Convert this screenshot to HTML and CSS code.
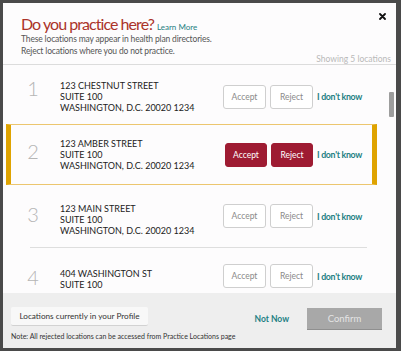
FILE: index.html
```html
<!DOCTYPE html>
<html>
<head>
<meta charset="utf-8">
<link rel="stylesheet" href="styles.css">
</head>
<body>
<div class="frame">
  <div class="modal">
    <div class="header">
      <div class="title-row">
        <h1 class="title">Do you practice here?</h1>
        <a class="learn">Learn More</a>
        <span class="close"><svg width="7" height="7" viewBox="0 0 7 7"><path d="M1 1L6 6M6 1L1 6" stroke="#111" stroke-width="1.8" stroke-linecap="round"/></svg></span>
      </div>
      <div class="sub-row">
        <p class="sub">These locations may appear in health plan directories.<br>Reject locations where you do not practice.</p>
        <span class="meta">Showing 5 locations</span>
      </div>
    </div>
    <div class="list">
      <div class="rows">
        <div class="row r1">
          <div class="num">1</div>
          <div class="addr">123 CHESTNUT STREET<br>SUITE 100<br>WASHINGTON, D.C. 20020 1234</div>
          <div class="actions"><button class="btn">Accept</button><button class="btn">Reject</button><a class="idk">I don't know</a></div>
        </div>
        <div class="row r2 selected">
          <div class="num">2</div>
          <div class="addr">123 AMBER STREET<br>SUITE 100<br>WASHINGTON, D.C. 20020 1234</div>
          <div class="actions"><button class="btn on">Accept</button><button class="btn on">Reject</button><a class="idk">I don't know</a></div>
        </div>
        <div class="row r3">
          <div class="num">3</div>
          <div class="addr">123 MAIN STREET<br>SUITE 100<br>WASHINGTON, D.C. 20020 1234</div>
          <div class="actions"><button class="btn">Accept</button><button class="btn">Reject</button><a class="idk">I don't know</a></div>
        </div>
        <div class="sep"></div>
        <div class="row r4">
          <div class="num">4</div>
          <div class="addr">404 WASHINGTON ST<br>SUITE 100</div>
          <div class="actions"><button class="btn">Accept</button><button class="btn">Reject</button><a class="idk">I don't know</a></div>
        </div>
      </div>
      <div class="track"><div class="thumb"></div></div>
    </div>
    <div class="footer">
      <div class="foot-row">
        <button class="profile">Locations currently in your Profile</button>
        <a class="notnow">Not Now</a>
        <button class="confirm">Confirm</button>
      </div>
      <p class="note">Note: All rejected locations can be accessed from Practice Locations page</p>
    </div>
  </div>
</div>
</body>
</html>
```

FILE: styles.css
```css
* { box-sizing: border-box; }
html, body { margin: 0; padding: 0; }
body { font-family: Lato, "Open Sans", Arial, sans-serif; background: #4a4a4a; }
.frame {
  width: 401px; height: 351px;
  background: #4a4a4a;
  padding: 3px 5px 3px 3px;
}
.modal {
  height: 345px;
  background: #fdfcfd;
  display: flex;
  flex-direction: column;
  overflow: hidden;
}
.header {
  padding: 11px 10px 0 18px;
  border-bottom: 1px solid #dcdcdc;
  flex: none;
}
.title-row { display: flex; align-items: baseline; height: 20px; }
.title {
  margin: 0; font-size: 16px; line-height: 20px; font-weight: 400;
  color: #ab3329; letter-spacing: -0.95px;
}
.learn {
  margin-left: 3px; font-size: 8px; color: #1d7f83; line-height: 20px;
}
.close { margin-left: auto; line-height: 0; align-self: flex-start; margin-top: -1px; }
.sub-row { display: flex; align-items: flex-end; justify-content: space-between; }
.sub {
  margin: 0 0 7px 0; font-size: 8.5px; line-height: 11.5px; color: #555; letter-spacing: -0.15px;
}
.meta {
  font-size: 8.5px; line-height: 10px; color: #b9b9b9;
  margin-right: -5px;
}
.list { flex: 1; display: flex; overflow: hidden; min-height: 0; }
.rows { width: 371px; margin-left: 3px; flex: none; }
.track { flex: 1; }
.thumb { width: 5px; height: 25px; background: #9d9d9d; margin: 27px 0 0 12px; border-radius: 1px; }
.row {
  display: flex; align-items: center;
  border: 1px solid transparent; border-left-width: 5px; border-right-width: 5px;
  height: 61px;
}
.row.r1 { height: 59px; padding-top: 4px; }
.row.r3 { height: 62px; }
.row.r4 { align-items: flex-start; height: 45px; }
.row.selected { border-color: #ecc66f; border-left-color: #dfa300; border-right-color: #dfa300; }
.sep { height: 1px; background: #dedede; margin: 0 10px 0 24px; }
.num {
  width: 44px; text-align: center; font-size: 20px; font-weight: 300; color: #b5b5b5;
  line-height: 20px; flex: none;
}
.r1 .num { margin-bottom: 18px; }
.r2 .num { margin-bottom: 7px; }
.r3 .num { margin-bottom: 4px; }
.r4 .num { margin-top: 18px; }
.addr {
  margin-left: 5px; flex: 1; font-size: 9px; line-height: 11px; color: #222;
}
.r3 .addr { margin-top: 6px; }
.r4 .addr { margin-top: 19px; }
.r4 .actions { margin-top: 15px; }
.actions { display: flex; align-items: center; gap: 4px; padding-right: 10px; }
.btn {
  width: 43px; height: 24px; border: 1px solid #cfcfcf; border-radius: 3px;
  background: #fff; color: #8a8a8a; font-family: inherit; font-size: 8.5px; padding: 0;
}
.btn.on { background: #9e1b32; border-color: #9e1b32; color: #fff; width: 42px; }
.idk { width: 45px; font-size: 8.8px; color: #1d7f83; font-weight: 700; letter-spacing: -0.3px; white-space: nowrap; }
.footer {
  flex: none; height: 55px; background: #eeeeee; padding: 14px 14px 0 8px;
}
.foot-row { display: flex; align-items: center; height: 23px; }
.profile {
  align-self: flex-start;
  height: 19px; width: 137px; background: #f8f8f8; border: none; border-bottom: 1px solid #d2d2d2;
  font-family: inherit; font-size: 8.2px; color: #333; padding: 0; border-radius: 2px;
}
.notnow { margin-left: auto; margin-right: 18px; font-size: 8.5px; color: #1d7f83; font-weight: 700; }
.confirm {
  width: 75px; height: 22px; background: #a8a8a8; color: #e4e4e4; border: none; border-bottom: 1px solid #8f8f8f;
  font-family: inherit; font-size: 9.5px; padding: 0; margin-top: 1px;
}
.note { margin: 2px 0 0 0; font-size: 7px; line-height: 9px; color: #333; }
```
